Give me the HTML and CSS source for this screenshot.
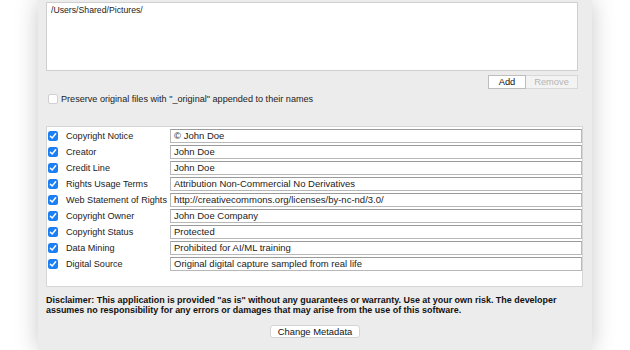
FILE: index.html
```html
<!DOCTYPE html>
<html lang="en">
<head>
    <meta charset="UTF-8">
    <title>Metadata</title>
    <link rel="stylesheet" href="styles.css">
</head>
<body>
  <div class="window">
      <div class="folders">/Users/Shared/Pictures/</div>

      <div class="folder-buttons">
          <button class="small-btn">Add</button>
          <button class="small-btn" disabled>Remove</button>
      </div>

      <label class="preserve">
          <span class="box"></span>
          Preserve original files with "_original" appended to their names
      </label>

      <div class="fields">
          <div class="row"><span class="check"></span><span class="name">Copyright Notice</span><div class="value">© John Doe</div></div>
          <div class="row"><span class="check"></span><span class="name">Creator</span><div class="value">John Doe</div></div>
          <div class="row"><span class="check"></span><span class="name">Credit Line</span><div class="value">John Doe</div></div>
          <div class="row"><span class="check"></span><span class="name">Rights Usage Terms</span><div class="value">Attribution Non-Commercial No Derivatives</div></div>
          <div class="row"><span class="check"></span><span class="name">Web Statement of Rights</span><div class="value">http://creativecommons.org/licenses/by-nc-nd/3.0/</div></div>
          <div class="row"><span class="check"></span><span class="name">Copyright Owner</span><div class="value">John Doe Company</div></div>
          <div class="row"><span class="check"></span><span class="name">Copyright Status</span><div class="value">Protected</div></div>
          <div class="row"><span class="check"></span><span class="name">Data Mining</span><div class="value">Prohibited for AI/ML training</div></div>
          <div class="row"><span class="check"></span><span class="name">Digital Source</span><div class="value">Original digital capture sampled from real life</div></div>
      </div>

      <p class="disclaimer">Disclaimer: This application is provided "as is" without any guarantees or warranty. Use at your own risk. The developer assumes no responsibility for any errors or damages that may arise from the use of this software.</p>

      <div class="actions">
          <button class="change-btn">Change Metadata</button>
      </div>
  </div>
</body>
</html>
```

FILE: styles.css
```css
body {
    margin: 0;
    background: #ffffff;
    font-family: "Liberation Sans", Arial, sans-serif;
    font-size: 9.1px;
    color: #222;
    overflow: hidden;
}

.window {
    margin-left: 38px;
    width: 554px;
    height: 350px;
    padding: 2px 0 0 8px;
    box-sizing: border-box;
    background: #ececec;
    box-shadow: 0 0 22px rgba(0, 0, 0, 0.22);
}

.folders {
    width: 532px;
    height: 69px;
    box-sizing: border-box;
    background: #fff;
    border: 1px solid #cfcfcf;
    padding: 2px 4px;
    font-size: 8.7px;
}

.folder-buttons {
    display: flex;
    justify-content: flex-end;
    width: 532px;
    margin-top: 4px;
}

.small-btn {
    height: 14px;
    padding: 0;
    font-family: inherit;
    font-size: 9.3px;
    color: #111;
    background: #fff;
    border: 1px solid #bdbdbd;
}

.small-btn:first-child {
    width: 38px;
}

.small-btn:disabled {
    width: 52px;
    color: #b4b4b4;
    background: #f3f3f3;
    border-color: #d8d8d8;
    border-left: none;
}

.preserve {
    display: flex;
    align-items: center;
    gap: 3px;
    margin-top: 5px;
    margin-left: 2px;
    height: 10px;
}

.box {
    width: 8px;
    height: 8px;
    background: #fff;
    border: 1px solid #d0d0d0;
    border-radius: 2px;
}

.fields {
    margin-top: 22px;
    width: 537px;
    height: 161px;
    box-sizing: border-box;
    background: #fff;
    border: 1px solid #d6d6d6;
    padding-top: 1px;
}

.row {
    display: flex;
    align-items: center;
    height: 16px;
}

.check {
    width: 10px;
    height: 10px;
    margin-left: 1px;
    border-radius: 2.5px;
    background: #1a7ff5 url("data:image/svg+xml;utf8,<svg xmlns='http://www.w3.org/2000/svg' viewBox='0 0 10 10'><path d='M2.4 5.2 L4.2 7 L7.6 2.8' fill='none' stroke='white' stroke-width='1.5' stroke-linecap='round' stroke-linejoin='round'/></svg>") no-repeat center / 10px 10px;
}

.name {
    width: 104px;
    margin-left: 8px;
    white-space: nowrap;
}

.value {
    width: 412px;
    height: 14px;
    line-height: 12px;
    box-sizing: border-box;
    border: 1px solid #b8b8b8;
    border-top-color: #9a9a9a;
    padding-left: 3px;
    font-size: 9.5px;
    white-space: nowrap;
}

.disclaimer {
    margin: 8px 0 0 0;
    width: 532px;
    font-weight: bold;
    font-size: 8.95px;
    line-height: 10px;
    color: #111;
}

.actions {
    display: flex;
    justify-content: center;
    width: 538px;
    margin-top: 10px;
}

.change-btn {
    width: 90px;
    height: 13px;
    padding: 0;
    font-family: inherit;
    font-size: 9.4px;
    color: #111;
    background: #fff;
    border: 1px solid #d4d4d4;
    border-radius: 3px;
}
```
